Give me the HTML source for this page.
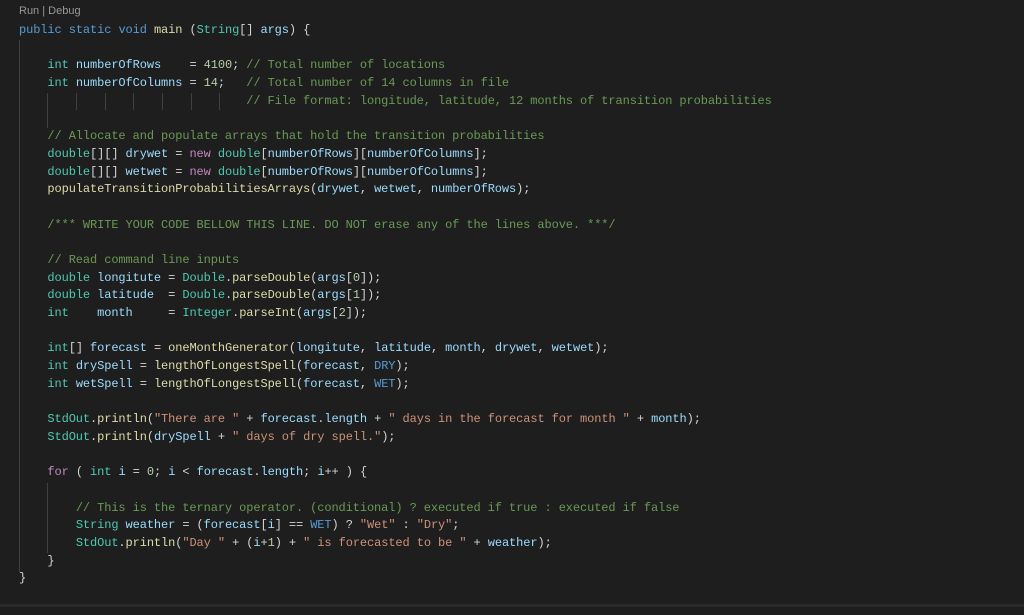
<!DOCTYPE html>
<html><head><meta charset="utf-8"><style>
html,body{margin:0;padding:0;background:#1e1e1e;width:1024px;height:615px;overflow:hidden;position:relative}
.cl{position:absolute;left:19px;top:5px;font:11px "Liberation Sans",sans-serif;color:#999}
pre{position:absolute;left:19px;top:22px;margin:0;font:12px/17.68px "Liberation Mono",monospace;letter-spacing:-0.1px;color:#d4d4d4}
.k{color:#569cd6}.t{color:#4ec9b0}.f{color:#dcdcaa}.v{color:#9cdcfe}.n{color:#b5cea8}.s{color:#ce9178}.c{color:#6a9955}.p{color:#c586c0}
.g{position:absolute;width:1px;background:#404040}
.bar{position:absolute;left:0;top:604px;width:1024px;height:3px;background:#2a2a2a}
</style></head><body>
<div class="cl">Run | Debug</div>
<div class="g" style="left:19px;top:40px;height:532px"></div>
<div class="g" style="left:47px;top:93px;height:35px"></div>
<div class="g" style="left:76px;top:93px;height:17px"></div>
<div class="g" style="left:105px;top:93px;height:17px"></div>
<div class="g" style="left:133px;top:93px;height:17px"></div>
<div class="g" style="left:162px;top:93px;height:17px"></div>
<div class="g" style="left:191px;top:93px;height:17px"></div>
<div class="g" style="left:219px;top:93px;height:17px"></div>
<div class="g" style="left:47px;top:483px;height:70px"></div>
<pre><span class="k">public</span> <span class="k">static</span> <span class="k">void</span> <span class="f">main</span> (<span class="t">String</span>[] <span class="v">args</span>) {

    <span class="t">int</span> <span class="v">numberOfRows</span>    = <span class="n">4100</span>; <span class="c">// Total number of locations</span>
    <span class="t">int</span> <span class="v">numberOfColumns</span> = <span class="n">14</span>;   <span class="c">// Total number of 14 columns in file</span>
                                <span class="c">// File format: longitude, latitude, 12 months of transition probabilities</span>

    <span class="c">// Allocate and populate arrays that hold the transition probabilities</span>
    <span class="t">double</span>[][] <span class="v">drywet</span> = <span class="p">new</span> <span class="t">double</span>[<span class="v">numberOfRows</span>][<span class="v">numberOfColumns</span>];
    <span class="t">double</span>[][] <span class="v">wetwet</span> = <span class="p">new</span> <span class="t">double</span>[<span class="v">numberOfRows</span>][<span class="v">numberOfColumns</span>];
    <span class="f">populateTransitionProbabilitiesArrays</span>(<span class="v">drywet</span>, <span class="v">wetwet</span>, <span class="v">numberOfRows</span>);

    <span class="c">/*** WRITE YOUR CODE BELLOW THIS LINE. DO NOT erase any of the lines above. ***/</span>

    <span class="c">// Read command line inputs</span>
    <span class="t">double</span> <span class="v">longitute</span> = <span class="t">Double</span>.<span class="f">parseDouble</span>(<span class="v">args</span>[<span class="n">0</span>]);
    <span class="t">double</span> <span class="v">latitude</span>  = <span class="t">Double</span>.<span class="f">parseDouble</span>(<span class="v">args</span>[<span class="n">1</span>]);
    <span class="t">int</span>    <span class="v">month</span>     = <span class="t">Integer</span>.<span class="f">parseInt</span>(<span class="v">args</span>[<span class="n">2</span>]);

    <span class="t">int</span>[] <span class="v">forecast</span> = <span class="f">oneMonthGenerator</span>(<span class="v">longitute</span>, <span class="v">latitude</span>, <span class="v">month</span>, <span class="v">drywet</span>, <span class="v">wetwet</span>);
    <span class="t">int</span> <span class="v">drySpell</span> = <span class="f">lengthOfLongestSpell</span>(<span class="v">forecast</span>, <span class="k">DRY</span>);
    <span class="t">int</span> <span class="v">wetSpell</span> = <span class="f">lengthOfLongestSpell</span>(<span class="v">forecast</span>, <span class="k">WET</span>);

    <span class="t">StdOut</span>.<span class="f">println</span>(<span class="s">"There are "</span> + <span class="v">forecast</span>.<span class="v">length</span> + <span class="s">" days in the forecast for month "</span> + <span class="v">month</span>);
    <span class="t">StdOut</span>.<span class="f">println</span>(<span class="v">drySpell</span> + <span class="s">" days of dry spell."</span>);

    <span class="p">for</span> ( <span class="t">int</span> <span class="v">i</span> = <span class="n">0</span>; <span class="v">i</span> &lt; <span class="v">forecast</span>.<span class="v">length</span>; <span class="v">i</span>++ ) {

        <span class="c">// This is the ternary operator. (conditional) ? executed if true : executed if false</span>
        <span class="t">String</span> <span class="v">weather</span> = (<span class="v">forecast</span>[<span class="v">i</span>] == <span class="k">WET</span>) ? <span class="s">"Wet"</span> : <span class="s">"Dry"</span>;
        <span class="t">StdOut</span>.<span class="f">println</span>(<span class="s">"Day "</span> + (<span class="v">i</span>+<span class="n">1</span>) + <span class="s">" is forecasted to be "</span> + <span class="v">weather</span>);
    }
}</pre>
<div class="bar"></div>
</body></html>
